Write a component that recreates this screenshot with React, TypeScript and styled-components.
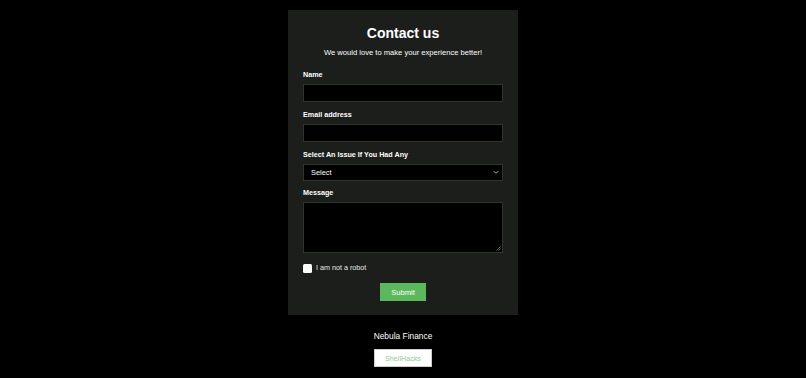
import React from "react";
import styled, { createGlobalStyle } from "styled-components";

const Global = createGlobalStyle`
  html, body { margin: 0; padding: 0; background: #000; }
  body { font-family: "Liberation Sans", Arial, sans-serif; color: #fff; }
  * { box-sizing: border-box; }
`;

const Page = styled.div`
  width: 806px;
  min-height: 378px;
  background: #000;
  display: flex;
  flex-direction: column;
  align-items: center;
  padding-top: 10px;
`;

const Card = styled.form`
  width: 230px;
  background: #1c1e1b;
  padding: 15px 15px 14px;
  display: flex;
  flex-direction: column;
`;

const Title = styled.h1`
  margin: 0;
  font-size: 14px;
  font-weight: 700;
  text-align: center;
  line-height: 17px;
`;

const Subtitle = styled.p`
  margin: 6px 0 12px;
  font-size: 7.6px;
  text-align: center;
  line-height: 10px;
`;

const Label = styled.label`
  display: block;
  font-size: 7.2px;
  font-weight: 700;
  line-height: 10px;
  margin-bottom: 4px;
`;

const Field = styled.div<{ $gap?: number }>`
  margin-bottom: ${(p) => p.$gap ?? 8}px;
`;

const Input = styled.input`
  width: 200px;
  height: 18px;
  background: #000;
  border: 1px solid #2e352d;
  color: #fff;
  display: block;
  outline: none;
`;

const SelectWrap = styled.div`
  position: relative;
  width: 200px;
  height: 17px;
  background: #000;
  border: 1px solid #2e352d;
  display: flex;
  align-items: center;
  padding-left: 7px;
  font-size: 7.4px;
`;

const Chevron = styled.svg`
  position: absolute;
  right: 3px;
  top: 5px;
`;

const TextArea = styled.div`
  position: relative;
  width: 200px;
  height: 51px;
  background: #000;
  border: 1px solid #2e352d;
`;

const Grip = styled.svg`
  position: absolute;
  right: 1px;
  bottom: 1px;
`;

const CheckRow = styled.div`
  display: flex;
  align-items: center;
  gap: 4px;
  margin-top: 10px;
  font-size: 7.2px;
  line-height: 10px;
  color: #e8e8e8;
`;

const Box = styled.span`
  width: 9px;
  height: 9px;
  background: #fff;
  border-radius: 1.5px;
  display: inline-block;
`;

const Submit = styled.button`
  align-self: center;
  margin-top: 10px;
  width: 46px;
  height: 18px;
  background: #5cb85c;
  border: none;
  color: #fff;
  font-family: inherit;
  font-size: 7.6px;
  padding: 0;
`;

const Footer = styled.div`
  margin-top: 16px;
  font-size: 8.4px;
  line-height: 10px;
`;

const ShellBtn = styled.button`
  margin-top: 8px;
  width: 58px;
  height: 18px;
  background: #fff;
  border: 1px solid #ccc;
  color: #8fce8f;
  font-family: inherit;
  font-size: 7.2px;
  padding: 0;
`;

export default function App() {
  return (
    <>
      <Global />
      <Page>
        <Card onSubmit={(e) => e.preventDefault()}>
          <Title>Contact us</Title>
          <Subtitle>We would love to make your experience better!</Subtitle>
          <Field>
            <Label>Name</Label>
            <Input />
          </Field>
          <Field>
            <Label>Email address</Label>
            <Input />
          </Field>
          <Field $gap={7}>
            <Label>Select An Issue If You Had Any</Label>
            <SelectWrap>
              Select
              <Chevron width="6" height="5" viewBox="0 0 6 5">
                <path d="M0.8 1.2 L3 3.4 L5.2 1.2" stroke="#ccc" strokeWidth="0.9" fill="none" />
              </Chevron>
            </SelectWrap>
          </Field>
          <Field $gap={0}>
            <Label>Message</Label>
            <TextArea>
              <Grip width="5" height="5" viewBox="0 0 5 5">
                <path d="M4.5 0.5 L0.5 4.5 M4.5 2.5 L2.5 4.5" stroke="#888" strokeWidth="0.7" />
              </Grip>
            </TextArea>
          </Field>
          <CheckRow>
            <Box />
            I am not a robot
          </CheckRow>
          <Submit type="submit">Submit</Submit>
        </Card>
        <Footer>Nebula Finance</Footer>
        <ShellBtn>ShellHacks</ShellBtn>
      </Page>
    </>
  );
}
